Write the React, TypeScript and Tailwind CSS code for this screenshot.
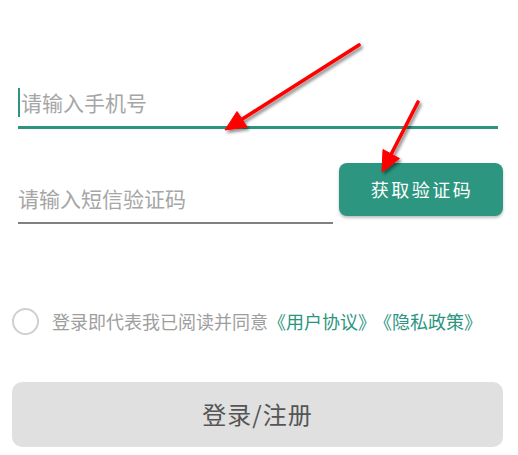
import React from "react";

const font = '"Noto Sans CJK SC", "Noto Sans", sans-serif';

function Arrows() {
  return (
    <svg
      className="pointer-events-none absolute left-0 top-0"
      width={518}
      height={455}
      viewBox="0 0 518 455"
    >
      <defs>
        <filter id="sh" x="-20%" y="-20%" width="140%" height="140%">
          <feDropShadow dx="2" dy="2.5" stdDeviation="1.8" floodColor="#000" floodOpacity="0.45" />
        </filter>
      </defs>
      <g filter="url(#sh)" fill="#ff0000" stroke="#ff0000">
        <line x1="359" y1="45" x2="240" y2="120.5" strokeWidth="3.6" strokeLinecap="round" />
        <polygon points="225,130 247,127 237,111.5" strokeWidth="1" strokeLinejoin="round" />
        <line x1="418" y1="102" x2="390.5" y2="155.5" strokeWidth="3.6" strokeLinecap="round" />
        <polygon points="382,172 399.5,158.5 383,149.5" strokeWidth="1" strokeLinejoin="round" />
      </g>
    </svg>
  );
}

export default function App() {
  return (
    <div
      className="relative h-[455px] w-[518px] overflow-hidden bg-white"
      style={{ fontFamily: font }}
    >
      {/* phone field */}
      <div className="pl-[18px] pr-[20px] pt-[88px]">
        <div className="flex h-[29px] items-center">
          <div className="h-[29px] w-[2px] bg-[#2b9580]" />
          <span className="ml-[1px] text-[21px] leading-[29px] text-[#a6a6a6]">请输入手机号</span>
        </div>
        <div className="mt-[9px] h-[3px] bg-[#2b9580]" />
      </div>

      {/* sms row */}
      <div className="mt-[34px] flex pl-[18px] pr-[15px]">
        <div className="flex w-[315px] flex-col">
          <div className="mt-[21px] flex h-[28px] items-center">
            <span className="text-[21px] leading-[28px] text-[#a6a6a6]">请输入短信验证码</span>
          </div>
          <div className="mt-[10px] h-[1.5px] bg-[#808080]" />
        </div>
        <button className="ml-[6px] flex h-[53px] w-[164px] items-center justify-center rounded-[8px] bg-[#2c9680] pl-[2px] text-[18px] tracking-[2.5px] text-white shadow-[0_2px_3px_rgba(0,0,0,0.25)]">
          获取验证码
        </button>
      </div>

      {/* agreement */}
      <div className="mt-[84px] flex items-center pl-[12px]">
        <div className="h-[27px] w-[27px] rounded-full border-2 border-[#cfcfcf]" />
        <div className="ml-[13px] text-[18px] leading-[24px] whitespace-nowrap">
          <span className="text-[#9e9e9e]">登录即代表我已阅读并同意</span>
          <span className="text-[#2b9580]">《用户协议》</span>
          <span className="ml-[7px] text-[#2b9580]">《隐私政策》</span>
        </div>
      </div>

      {/* login */}
      <div className="mt-[47px] pl-[12px] pr-[15px]">
        <button className="flex h-[65px] w-full items-center justify-center rounded-[10px] bg-[#e0e0e0] text-[24px] tracking-[1px] text-[#555555]">
          登录/注册
        </button>
      </div>

      <Arrows />
    </div>
  );
}
